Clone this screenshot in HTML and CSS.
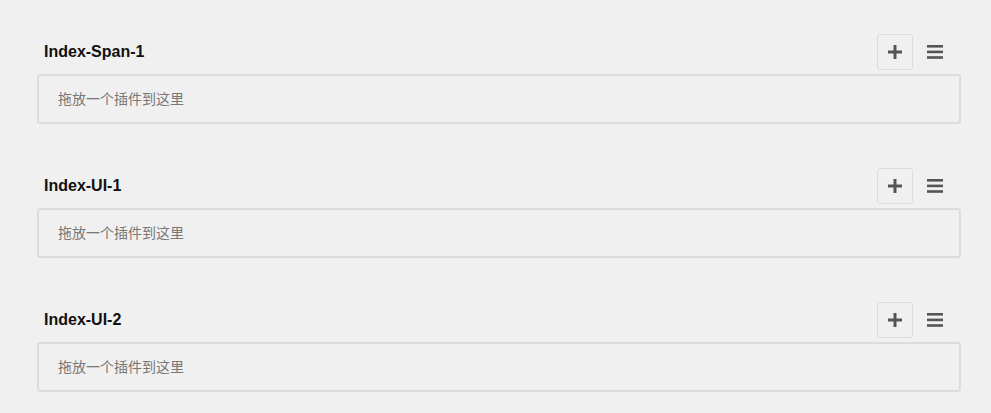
FILE: index.html
```html
<!DOCTYPE html>
<html lang="zh">
<head>
<meta charset="utf-8">
<title>Index</title>
<link rel="stylesheet" href="styles.css">
</head>
<body>
<main class="page">
  <section class="region">
    <div class="region-head">
      <h2 class="region-title">Index-Span-1</h2>
      <button class="btn-add" type="button" aria-label="添加">
        <svg width="14" height="14" viewBox="0 0 14 14"><rect x="5.5" y="0" width="3" height="14" fill="#555"/><rect x="0" y="5.5" width="14" height="3" fill="#555"/></svg>
      </button>
      <button class="btn-menu" type="button" aria-label="菜单">
        <svg width="16" height="14" viewBox="0 0 16 14"><rect x="0" y="0" width="16" height="2.6" fill="#555"/><rect x="0" y="5.6" width="16" height="2.6" fill="#555"/><rect x="0" y="11.2" width="16" height="2.6" fill="#555"/></svg>
      </button>
    </div>
    <div class="dropzone">拖放一个插件到这里</div>
  </section>
  <section class="region">
    <div class="region-head">
      <h2 class="region-title">Index-UI-1</h2>
      <button class="btn-add" type="button" aria-label="添加">
        <svg width="14" height="14" viewBox="0 0 14 14"><rect x="5.5" y="0" width="3" height="14" fill="#555"/><rect x="0" y="5.5" width="14" height="3" fill="#555"/></svg>
      </button>
      <button class="btn-menu" type="button" aria-label="菜单">
        <svg width="16" height="14" viewBox="0 0 16 14"><rect x="0" y="0" width="16" height="2.6" fill="#555"/><rect x="0" y="5.6" width="16" height="2.6" fill="#555"/><rect x="0" y="11.2" width="16" height="2.6" fill="#555"/></svg>
      </button>
    </div>
    <div class="dropzone">拖放一个插件到这里</div>
  </section>
  <section class="region">
    <div class="region-head">
      <h2 class="region-title">Index-UI-2</h2>
      <button class="btn-add" type="button" aria-label="添加">
        <svg width="14" height="14" viewBox="0 0 14 14"><rect x="5.5" y="0" width="3" height="14" fill="#555"/><rect x="0" y="5.5" width="14" height="3" fill="#555"/></svg>
      </button>
      <button class="btn-menu" type="button" aria-label="菜单">
        <svg width="16" height="14" viewBox="0 0 16 14"><rect x="0" y="0" width="16" height="2.6" fill="#555"/><rect x="0" y="5.6" width="16" height="2.6" fill="#555"/><rect x="0" y="11.2" width="16" height="2.6" fill="#555"/></svg>
      </button>
    </div>
    <div class="dropzone">拖放一个插件到这里</div>
  </section>
</main>
</body>
</html>
```
FILE: styles.css
```css
html, body {
  margin: 0;
  padding: 0;
  background: #f0f0f0;
}
body {
  font-family: "Liberation Sans", Arial, "Noto Sans CJK SC", sans-serif;
  overflow: hidden;
}
.page {
  padding: 34px 0 0 37px;
  width: 924px;
}
.region {
  margin-bottom: 44px;
}
.region:last-child {
  margin-bottom: 0;
}
.region-head {
  display: flex;
  align-items: center;
  height: 36px;
  margin-bottom: 4px;
  padding: 0 8px 0 7px;
}
.region-title {
  margin: 0;
  font-size: 16px;
  font-weight: bold;
  color: #111;
  flex: 1;
}
.btn-add, .btn-menu {
  width: 36px;
  height: 36px;
  padding: 0;
  margin: 0;
  display: flex;
  align-items: center;
  justify-content: center;
  background: transparent;
  cursor: pointer;
}
.btn-add {
  border: 1px solid #dcdcdc;
  border-radius: 3px;
}
.btn-menu {
  border: none;
  margin-left: 4px;
}
.dropzone {
  height: 46px;
  border: 2px solid #dcdcdc;
  border-radius: 3px;
  padding: 0 0 3px 19px;
  box-sizing: content-box;
  display: flex;
  align-items: center;
  font-family: "Noto Sans CJK SC", sans-serif;
  font-size: 14px;
  color: #777;
}
.dropzone {
  height: 43px;
}
```
